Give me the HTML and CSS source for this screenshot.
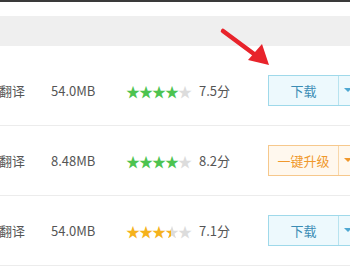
FILE: index.html
```
<!DOCTYPE html>
<html>
<head>
<meta charset="utf-8">
<link rel="stylesheet" href="styles.css">
</head>
<body>
<div class="page">
  <div class="topline"></div>
  <div class="gap"></div>
  <div class="band"></div>
  <div class="list">
    <div class="row">
      <div class="name">翻译</div>
      <div class="size">54.0MB</div>
      <div class="stars green">
        <span class="s on">★</span><span class="s on">★</span><span class="s on">★</span><span class="s on">★</span><span class="s">★</span>
      </div>
      <div class="score">7.5分</div>
      <div class="btn blue"><span class="label">下载</span><span class="drop"><i class="caret"></i></span></div>
    </div>
    <div class="row">
      <div class="name">翻译</div>
      <div class="size">8.48MB</div>
      <div class="stars green">
        <span class="s on">★</span><span class="s on">★</span><span class="s on">★</span><span class="s on">★</span><span class="s">★</span>
      </div>
      <div class="score">8.2分</div>
      <div class="btn orange"><span class="label">一键升级</span><span class="drop"><i class="caret"></i></span></div>
    </div>
    <div class="row">
      <div class="name">翻译</div>
      <div class="size">54.0MB</div>
      <div class="stars gold">
        <span class="s on">★</span><span class="s on">★</span><span class="s on">★</span><span class="s half">★</span><span class="s">★</span>
      </div>
      <div class="score">7.1分</div>
      <div class="btn blue"><span class="label">下载</span><span class="drop"><i class="caret"></i></span></div>
    </div>
  </div>
  <svg class="arrow" width="350" height="266" viewBox="0 0 350 266">
    <line x1="223" y1="31" x2="254" y2="54" stroke="#e8232b" stroke-width="4.5" stroke-linecap="round"/>
    <polygon points="248,60 262,44 269,65" fill="#e8232b"/>
  </svg>
</div>
</body>
</html>
```
FILE: styles.css
```
html, body {
  margin: 0;
  padding: 0;
  background: #fff;
}
.page {
  position: relative;
  width: 350px;
  height: 266px;
  overflow: hidden;
  font-family: "Microsoft YaHei", "Noto Sans CJK SC", "Noto Sans", sans-serif;
  font-size: 13px;
  color: #555;
}
.topline {
  height: 2px;
  background: #3a3a3a;
}
.gap {
  height: 14px;
}
.band {
  height: 30px;
  background: #efefef;
}
.list {
  padding-top: 10px;
}
.row {
  display: flex;
  align-items: center;
  height: 69px;
  border-bottom: 1px solid #ececec;
}
.name {
  width: 52px;
  margin-left: -1px;
  flex-shrink: 0;
}
.size {
  width: 75px;
  flex-shrink: 0;
}
.stars {
  width: 73px;
  flex-shrink: 0;
  display: flex;
  font-size: 14px;
  line-height: 14px;
}
.s {
  width: 13px;
  color: #dcdcdc;
  position: relative;
}
.green .on { color: #4cc350; }
.gold .on { color: #f5b21c; }
.gold .half {
  background: linear-gradient(90deg, #f5b21c 50%, #dcdcdc 50%);
  -webkit-background-clip: text;
  background-clip: text;
  color: transparent;
}
.score {
  width: 69px;
  flex-shrink: 0;
}
.btn {
  display: flex;
  height: 29px;
  border: 1px solid;
  flex-shrink: 0;
  box-sizing: content-box;
  margin-top: -1px;
}
.btn .label {
  width: 69px;
  display: flex;
  align-items: center;
  justify-content: center;
  font-size: 13px;
}
.btn .drop {
  width: 20px;
  border-left: 1px solid;
  display: flex;
  align-items: center;
  padding-left: 5px;
}
.caret {
  width: 0;
  height: 0;
  border-left: 4px solid transparent;
  border-right: 4px solid transparent;
  border-top: 4px solid;
}
.blue {
  border-color: #9fd9ea;
  background: #edf9fd;
  color: #3b8db5;
}
.blue .drop { border-color: #b8e3ef; }
.blue .caret { border-top-color: #4fa8d2; }
.orange {
  border-color: #f6c88c;
  background: #fff8ee;
  color: #f0982c;
}
.orange .drop { border-color: #f8d7aa; }
.orange .caret { border-top-color: #f0982c; }
.arrow {
  position: absolute;
  left: 0;
  top: 0;
}
```
